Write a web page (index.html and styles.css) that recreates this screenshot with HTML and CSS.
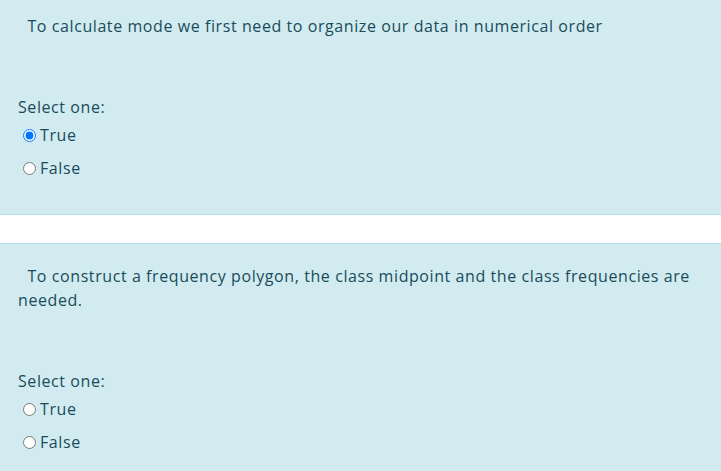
FILE: index.html
```html
<!DOCTYPE html>
<html>
<head>
<meta charset="utf-8">
<link rel="stylesheet" href="styles.css">
</head>
<body>
<div class="page">
  <div class="que">
    <div class="qtext">&nbsp; To calculate mode we first need to organize our data in numerical order</div>
    <div class="ablock">
      <div class="prompt">Select one:</div>
      <label class="option"><input type="radio" name="q1" checked> True</label>
      <label class="option"><input type="radio" name="q1"> False</label>
    </div>
  </div>
  <div class="que">
    <div class="qtext">&nbsp; To construct a frequency polygon, the class midpoint and the class frequencies are needed.</div>
    <div class="ablock">
      <div class="prompt">Select one:</div>
      <label class="option"><input type="radio" name="q2"> True</label>
      <label class="option"><input type="radio" name="q2"> False</label>
    </div>
  </div>
</div>
</body>
</html>
```
FILE: styles.css
```css
html, body {
  margin: 0;
  padding: 0;
  background: #ffffff;
}
body {
  font-family: "Open Sans", "Liberation Sans", sans-serif;
  font-size: 16px;
  letter-spacing: 0.58px;
  line-height: 24px;
  color: #1a4b5b;
}
.page {
  margin-top: -7px;
  display: flex;
  flex-direction: column;
  gap: 28px;
}
.que {
  background: #d1ebf0;
  border-top: 1px solid #b3e2ea;
  border-bottom: 1px solid #b3e2ea;
  padding: 20px 18px 29px 18px;
}
.qtext {
  margin-bottom: 57px;
}
.option {
  display: flex;
  align-items: center;
  padding: 4px 0 5px 0;
}
.option input {
  margin: 0 4px 0 5px;
  width: 13px;
  height: 13px;
}
```
